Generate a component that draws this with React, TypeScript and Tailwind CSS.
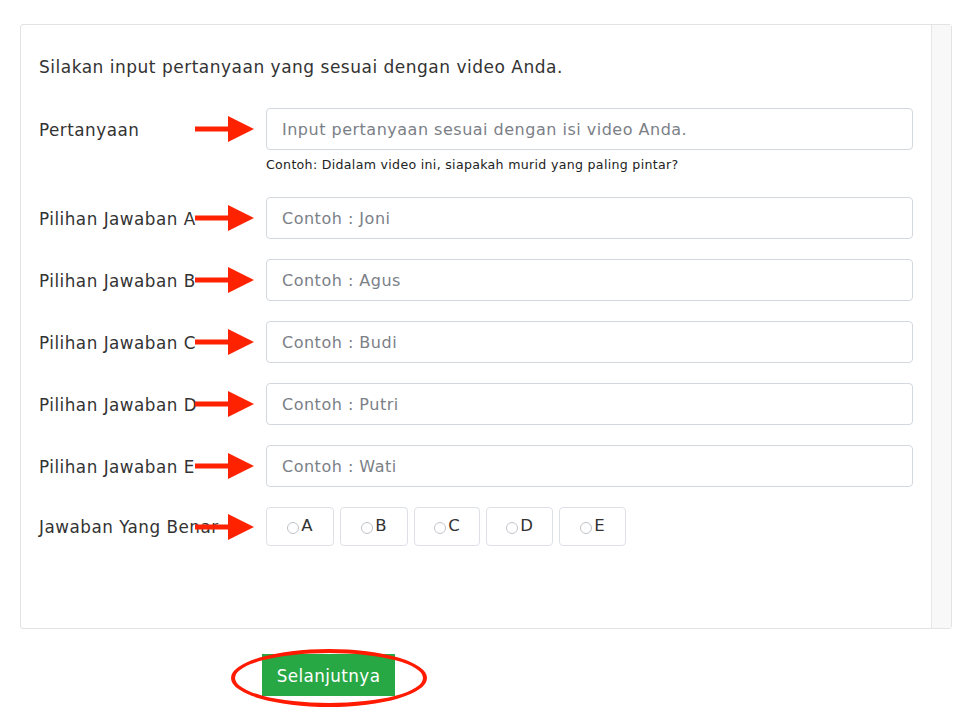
import React from 'react';

const Arrow = ({ top }: { top: string }) => (
    <svg
        className={`absolute left-[156px] ${top} w-[60px] h-[28px]`}
        viewBox="0 0 60 28"
    >
        <rect x="0" y="11.5" width="36" height="5" fill="#ff2200" />
        <polygon points="33,1 59,14 33,27" fill="#ff2200" />
    </svg>
);

const options = [
    { label: 'Pilihan Jawaban A', placeholder: 'Contoh : Joni' },
    { label: 'Pilihan Jawaban B', placeholder: 'Contoh : Agus' },
    { label: 'Pilihan Jawaban C', placeholder: 'Contoh : Budi' },
    { label: 'Pilihan Jawaban D', placeholder: 'Contoh : Putri' },
    { label: 'Pilihan Jawaban E', placeholder: 'Contoh : Wati' },
];

const answers = [
    { l: 'A', w: 'w-[68px]' },
    { l: 'B', w: 'w-[68px]' },
    { l: 'C', w: 'w-[66px]' },
    { l: 'D', w: 'w-[67px]' },
    { l: 'E', w: 'w-[67px]' },
];

const inputClass =
    "h-[42px] w-full rounded-[4px] border border-[#d3d8de] px-[15px] text-[16px] tracking-[0.5px] text-[#333] placeholder:text-[#7b8087] outline-none";

const labelClass = "flex h-[42px] w-[227px] items-center pt-[3px] text-[16.8px] tracking-[0.5px]";

export default function App() {
    return (
        <div className="min-h-[719px] w-[975px] bg-white pt-[24px] pl-[20px] text-[#333]" style={{ fontFamily: '"DejaVu Sans", sans-serif' }}>
            <div className="flex h-[605px] w-[932px] rounded-[3px] border border-[#e3e3e3]">
                <div className="flex-1 pt-[31px] pl-[18px] pr-[18px]">
                    <p className="text-[17px] leading-[22px] tracking-[0.5px]">Silakan input pertanyaan yang sesuai dengan video Anda.</p>

                    <div className="relative mt-[30px] flex">
                        <div className={labelClass}>Pertanyaan</div>
                        <div className="flex-1">
                            <input className={inputClass} placeholder="Input pertanyaan sesuai dengan isi video Anda." />
                            <p className="mt-[7px] text-[12.6px] leading-[16px] tracking-[0.3px] text-[#222]">Contoh: Didalam video ini, siapakah murid yang paling pintar?</p>
                        </div>
                        <Arrow top="top-[7px]" />
                    </div>

                    {options.map((opt, i) => (
                        <div key={i} className={`relative flex ${i === 0 ? 'mt-[24px]' : 'mt-[20px]'}`}>
                            <div className={labelClass}>{opt.label}</div>
                            <div className="flex-1">
                                <input className={inputClass} placeholder={opt.placeholder} />
                            </div>
                            <Arrow top="top-[7px]" />
                        </div>
                    ))}

                    <div className="relative mt-[20px] flex">
                        <div className="flex h-[39px] w-[227px] items-center pt-[3px] text-[16.8px] tracking-[0.5px]">Jawaban Yang Benar</div>
                        <div className="flex gap-[6px]">
                            {answers.map((a) => (
                                <label key={a.l} className={`flex h-[39px] ${a.w} items-center justify-center gap-[2px] rounded-[4px] border border-[#dde1e6] bg-white text-[16.5px]`}>
                                    <span className="mt-[3px] h-[12px] w-[12px] rounded-full border border-[#bfc3c8]" />
                                    <span className="-mt-[1px]">{a.l}</span>
                                </label>
                            ))}
                        </div>
                        <Arrow top="top-[6px]" />
                    </div>
                </div>
                <div className="w-[20px] border-l border-[#e6e6e6] bg-[#f8f8f8]" />
            </div>

            <div className="relative ml-[242px] mt-[25px] w-[133px]">
                <button className="h-[42px] w-[133px] bg-[#28a745] pt-[4px] text-[16.8px] tracking-[0.4px] text-white">Selanjutnya</button>
                <div className="absolute left-[-31px] top-[-5px] h-[58px] w-[196px] rounded-[50%] border-[4px] border-[#ff1a00]" />
            </div>
        </div>
    );
}
